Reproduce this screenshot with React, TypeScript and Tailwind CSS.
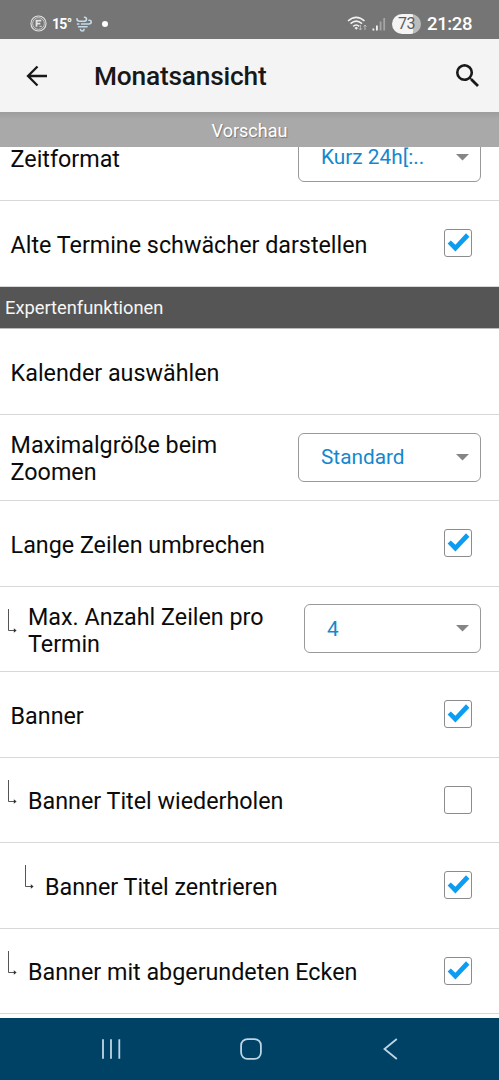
import React from "react";

function Check({ checked = true }: { checked?: boolean }) {
  return (
    <span role="checkbox" aria-checked={checked} className="mr-[27px] mb-px block size-7 shrink-0 rounded-[3px] border border-[#8c8c8c] bg-white">
      {checked && (
        <svg viewBox="1 1 26 26" className="size-[26px]" fill="#0c9cf2">
          <path d="M3.6 14.6 6.8 11.4 11.4 15.8 22 4.3 25.4 7.7 11.4 22.6Z" />
        </svg>
      )}
    </span>
  );
}

function Select({ value, narrow = false }: { value: string; narrow?: boolean }) {
  return (
    <div className={`mr-[18px] mb-px flex h-[49px] shrink-0 items-center justify-between rounded-md border-[1.5px] border-[#999] pr-[11px] pl-[22px] ${narrow ? "w-[177px]" : "w-[183px]"}`}>
      <span className="text-[20.8px] leading-6 text-[#1488ce]">{value}</span>
      <svg viewBox="0 0 13 7" className="h-[7px] w-[13px]" fill="#858585">
        <path d="M0 0H13L6.5 6.5Z" />
      </svg>
    </div>
  );
}

function Hook() {
  return (
    <svg viewBox="0 0 10 24" className="mr-[10px] mb-[17px] h-6 w-[10px] shrink-0" fill="none" stroke="#555">
      <path d="M0.5 0V21.5H7" />
      <path d="M5.8 19.2 8.6 21.5 5.8 23.8Z" fill="#333" stroke="none" />
    </svg>
  );
}

type RowProps = {
  label: React.ReactNode;
  level?: 0 | 1 | 2;
  height?: string;
  children?: React.ReactNode;
};

function Row({ label, level = 0, height = "h-[86px]", children }: RowProps) {
  const inset = level === 0 ? "pl-[10.6px]" : level === 1 ? "pl-2" : "pl-[25px]";
  return (
    <div className={`flex shrink-0 items-center border-b border-[#d8d8d8] ${height} ${inset}`}>
      {level > 0 && <Hook />}
      <span className="flex-1 pt-[3px] text-[23.3px] leading-[27px] whitespace-nowrap text-[#0b0b0b]">{label}</span>
      {children}
    </div>
  );
}

function StatusBar() {
  return (
    <div className="flex h-[39px] shrink-0 items-center bg-[#757575] pt-[8px] pr-[27px] pl-[30px] text-white">
      <svg viewBox="0 0 18 18" className="size-[17px]" fill="none" stroke="#e2e2e2">
        <circle cx="9" cy="9" r="8" strokeWidth="1.2" />
        <circle cx="9" cy="9" r="6.2" strokeWidth="0.8" />
        <path d="M6.9 12.5V6H12M6.9 9.1H11" strokeWidth="1.9" />
        <path d="M10 12H12.5" strokeWidth="1" />
      </svg>
      <span className="ml-[5px] text-[14px] leading-5 font-bold tracking-[-0.7px]">15°</span>
      <svg viewBox="0 0 16 16" className="ml-[5px] size-4" fill="none" stroke="#c5dced" strokeWidth="1.6" strokeLinecap="round">
        <path d="M1 2.8Q1 5.2 3.5 5.2H8Q10.5 5.2 10.5 3.2 10.5 1.2 8.5 1.2" />
        <path d="M5.5 8H12.8Q15.2 8 15.2 6 15.2 4 13 4.3M1.5 8H2.8M2.5 10.8H11M4.5 13.6Q4.8 15 6.3 15 8 15 8 13.4" />
      </svg>
      <span className="ml-[10px] size-[6px] rounded-full bg-white" />
      <span className="flex-1" />
      <svg viewBox="0 0 21 17" className="h-[17px] w-[21px]" fill="none" stroke="#f2f2f2" strokeWidth="1.6">
        <path d="M1 6Q9.2-1.4 17.5 6M3.6 8.7Q9.2 3.6 15 8.7M6.2 11.4Q9.2 8.6 12.2 11.4" />
        <path d="M7.5 13 9.2 11.7 11 13 9.2 14.7Z" fill="#f2f2f2" stroke="none" />
        <path d="M13.4 10V15M11.9 13.4 13.4 15 14.9 13.4M18 15V10M16.5 11.6 18 10 19.5 11.6" stroke="#bcbcbc" strokeWidth="1" />
      </svg>
      <svg viewBox="0 0 14 14" className="ml-[4px] h-[14px] w-[14px]">
        <path d="M0.5 11.5H2.3V13.5H0.5ZM4 8.5H5.8V13.5H4Z" fill="#f3f3f3" />
        <path d="M7.7 4.5H9.5V13.5H7.7ZM11.3 1H13.1V13.5H11.3Z" fill="#a5a5a5" />
      </svg>
      <span className="ml-[6px] flex h-5 w-[29px] items-center justify-center rounded-full bg-linear-to-r from-[#f4f4f4] from-73% to-[#bcbcbc] to-73% text-[16px] leading-5 text-[#5c5c5c] tracking-[-0.5px]">73</span>
      <span className="ml-[6px] text-[18.5px] leading-5 font-medium tracking-[-0.4px]">21:28</span>
    </div>
  );
}

export default function App() {
  return (
    <main className="flex h-[1080px] w-[499px] flex-col overflow-hidden bg-white font-['Roboto',sans-serif]">
      <StatusBar />
      <header className="flex h-[73px] shrink-0 items-center bg-[#f4f4f4] pr-[20px] pl-[26px] text-[#181818]">
        <svg viewBox="0 0 22 22" className="size-[22px]" fill="none" stroke="currentColor" strokeWidth="2.3">
          <path d="M21 11H2.5M11.5 1.5 2 11 11.5 20.5" />
        </svg>
        <h1 className="ml-[46px] flex-1 pt-px text-[26.3px] leading-8 font-medium tracking-[-0.2px]">Monatsansicht</h1>
        <svg viewBox="3 3 17.5 17.5" className="size-[23px]" fill="currentColor">
          <path d="M15.5 14h-.79l-.28-.27A6.471 6.471 0 0 0 16 9.5 6.5 6.5 0 1 0 9.5 16c1.61 0 3.09-.59 4.23-1.57l.27.28v.79l5 4.99L20.49 19l-4.99-5zm-6 0C7.01 14 5 11.99 5 9.5S7.01 5 9.5 5 14 7.01 14 9.5 11.99 14 9.5 14z" />
        </svg>
      </header>
      <div className="flex h-[35px] shrink-0 items-center justify-center bg-linear-to-b from-[#9d9d9d] to-[#a9a9a9] to-20% pt-0.5 text-[18px] leading-6 text-white text-shadow-[1px_1px_1px_#777]">Vorschau</div>
      <section className="flex h-[54px] shrink-0 flex-col justify-end overflow-hidden">
        <Row label="Zeitformat"><Select value="Kurz 24h[:.." /></Row>
      </section>
      <Row label="Alte Termine schwächer darstellen"><Check /></Row>
      <h2 className="flex h-[42px] shrink-0 items-center border-b border-[#bbb] bg-[#555] pt-px pl-[5px] text-[18.3px] leading-6 text-[#f5f5f5]">Expertenfunktionen</h2>
      <Row label="Kalender auswählen" />
      <Row label={<>Maximalgröße beim<br />Zoomen</>}><Select value="Standard" /></Row>
      <Row label="Lange Zeilen umbrechen"><Check /></Row>
      <Row label={<>Max. Anzahl Zeilen pro<br />Termin</>} level={1} height="h-[85px]"><Select value="4" narrow /></Row>
      <Row label="Banner" height="h-[86px]"><Check /></Row>
      <Row label="Banner Titel wiederholen" level={1} height="h-[85px]"><Check checked={false} /></Row>
      <Row label="Banner Titel zentrieren" level={2} height="h-[86px]"><Check /></Row>
      <Row label="Banner mit abgerundeten Ecken" level={1} height="h-[85px]"><Check /></Row>
      <nav className="mt-auto flex h-[62px] shrink-0 items-center justify-between bg-[#004266] pr-[101px] pb-px pl-[101px] text-[#bed5e4]">
        <svg viewBox="0 0 20 20" className="h-5 w-[20px]" fill="none" stroke="currentColor" strokeWidth="1.8">
          <path d="M2 0.3V19.7M10 0.3V19.7M18.3 0.3V19.7" />
        </svg>
        <svg viewBox="0 0 22 22" className="mr-[3px] size-[22px]" fill="none" stroke="currentColor" strokeWidth="1.8">
          <rect x="1.1" y="1.1" width="19.8" height="19.8" rx="6.3" />
        </svg>
        <svg viewBox="0 0 15 22" className="h-[22px] w-[15px]" fill="none" stroke="currentColor" strokeWidth="1.8">
          <path d="M13.8 1 1.5 11 13.8 21" />
        </svg>
      </nav>
    </main>
  );
}
